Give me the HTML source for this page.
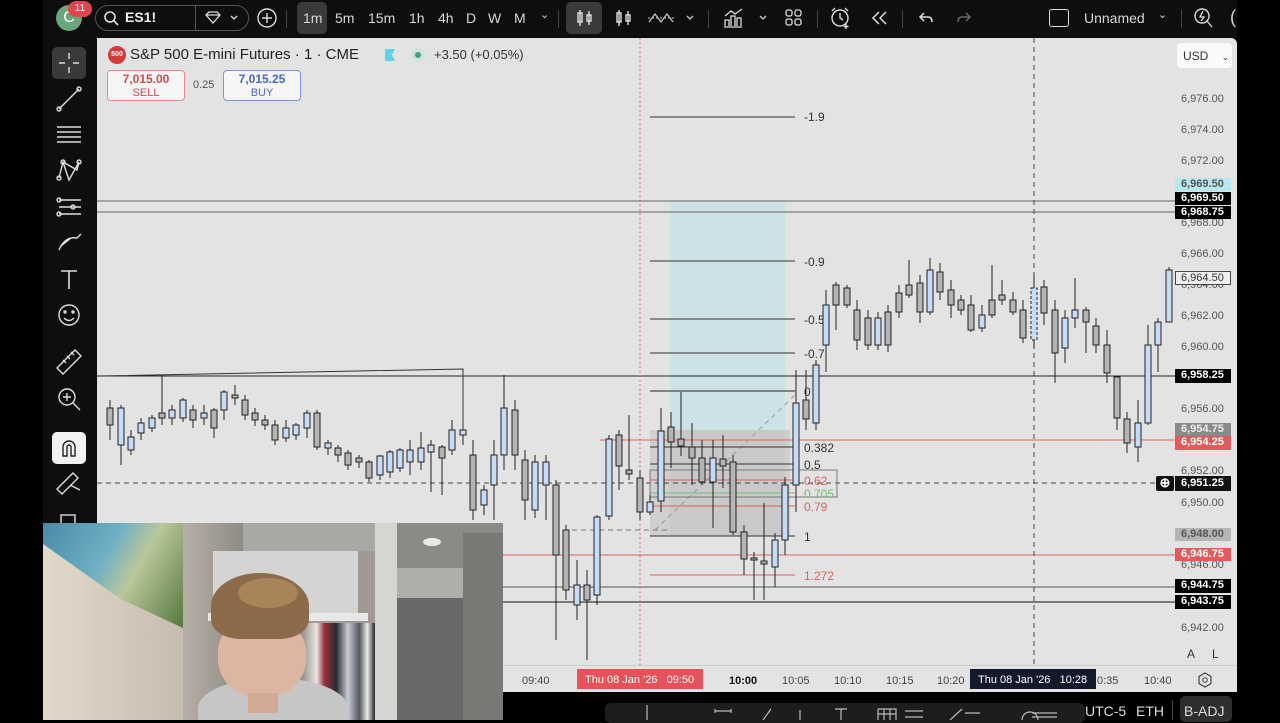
<!DOCTYPE html>
<html><head><meta charset="utf-8"><style>
*{margin:0;padding:0;box-sizing:border-box}
body{width:1280px;height:720px;background:#000;position:relative;overflow:hidden;font-family:"Liberation Sans",sans-serif}
.a{position:absolute}
.tb{color:#d8d8d8;font-size:14px}
</style></head><body>
<!-- top toolbar -->
<div class="a" style="left:43px;top:0;width:1194px;height:38px;background:#0e0e0e"></div>
<div class="a" style="left:56px;top:5px;width:26px;height:26px;border-radius:50%;background:#6aa77d;color:#fff;font-size:16px;text-align:center;line-height:26px">C</div>
<div class="a" style="left:68px;top:1px;width:24px;height:16px;border-radius:8px;background:#e0464f;color:#fff;font-size:10px;text-align:center;line-height:16px">11</div>
<div class="a" style="left:95px;top:5px;width:154px;height:26px;border:1px solid #555;border-radius:13px"></div>
<div class="a" style="left:195px;top:5px;width:1px;height:26px;background:#555"></div>
<svg class="a" style="left:103px;top:10px" width="16" height="16"><circle cx="7" cy="7" r="5" fill="none" stroke="#ddd" stroke-width="1.6"/><line x1="11" y1="11" x2="15" y2="15" stroke="#ddd" stroke-width="1.6"/></svg>
<div class="a tb" style="left:125px;top:9px;font-weight:bold;color:#eee">ES1!</div>
<svg class="a" style="left:204px;top:10px" width="40" height="16"><path d="M2 5 L5 2 H13 L16 5 L9 13 Z M2 5 H16" fill="none" stroke="#ddd" stroke-width="1.3"/><path d="M27 6 L30 9 L33 6" fill="none" stroke="#ddd" stroke-width="1.3"/></svg>
<svg class="a" style="left:256px;top:7px" width="22" height="22"><circle cx="11" cy="11" r="9" fill="none" stroke="#ddd" stroke-width="1.4"/><path d="M11 6V16M6 11H16" stroke="#ddd" stroke-width="1.4"/></svg>
<div class="a" style="left:286px;top:10px;width:1px;height:18px;background:#444"></div>
<div class="a" style="left:297px;top:2px;width:30px;height:32px;background:#3a3a3a;border-radius:5px"></div>
<div class="a tb" style="left:303px;top:10px">1m</div>
<div class="a tb" style="left:335px;top:10px">5m</div>
<div class="a tb" style="left:368px;top:10px">15m</div>
<div class="a tb" style="left:409px;top:10px">1h</div>
<div class="a tb" style="left:438px;top:10px">4h</div>
<div class="a tb" style="left:466px;top:10px">D</div>
<div class="a tb" style="left:488px;top:10px">W</div>
<div class="a tb" style="left:514px;top:10px">M</div>
<div class="a tb" style="left:540px;top:8px;font-size:11px">⌄</div>
<div class="a" style="left:558px;top:10px;width:1px;height:18px;background:#444"></div>
<div class="a" style="left:566px;top:2px;width:36px;height:32px;background:#3a3a3a;border-radius:5px"></div>
<svg class="a" style="left:575px;top:8px" width="20" height="20"><path d="M5 2V18M5 5H3V14H7V5ZM14 3V17M12 7H16V13H12Z" fill="none" stroke="#ddd" stroke-width="1.4"/></svg>
<svg class="a" style="left:614px;top:8px" width="20" height="20"><path d="M5 2V18M3 5H7V14H3ZM14 3V17" fill="none" stroke="#ddd" stroke-width="1.4"/><rect x="12" y="7" width="4" height="6" fill="none" stroke="#ddd" stroke-width="1.4"/></svg>
<svg class="a" style="left:647px;top:10px" width="50" height="16"><path d="M2 12L8 4L14 12L20 4L26 12" fill="none" stroke="#ccc" stroke-width="1.2"/><line x1="1" y1="8" x2="27" y2="8" stroke="#ccc" stroke-dasharray="2 2"/><path d="M40 6L43 9L46 6" fill="none" stroke="#ccc" stroke-width="1.3"/></svg>
<div class="a" style="left:708px;top:10px;width:1px;height:18px;background:#444"></div>
<svg class="a" style="left:722px;top:6px" width="48" height="24"><path d="M3 20V14H7V20M9 20V10H13V20M15 20V12H19V20M2 21H20M3 10L9 5L13 8L20 3" fill="none" stroke="#ddd" stroke-width="1.3"/><path d="M38 10L41 13L44 10" fill="none" stroke="#ccc" stroke-width="1.3"/></svg>
<svg class="a" style="left:784px;top:8px" width="20" height="20"><rect x="2" y="2" width="6" height="6" rx="2" fill="none" stroke="#ddd" stroke-width="1.3"/><rect x="11" y="2" width="6" height="6" rx="2" fill="none" stroke="#ddd" stroke-width="1.3"/><rect x="2" y="11" width="6" height="6" rx="2" fill="none" stroke="#ddd" stroke-width="1.3"/><rect x="11" y="11" width="6" height="6" rx="2" fill="none" stroke="#ddd" stroke-width="1.3"/></svg>
<div class="a" style="left:817px;top:10px;width:1px;height:18px;background:#444"></div>
<svg class="a" style="left:829px;top:6px" width="24" height="24"><circle cx="11" cy="12" r="8" fill="none" stroke="#ddd" stroke-width="1.4"/><path d="M11 7V12L14 14M3 5L6 2M19 5L16 2M17 18V23M14.5 20.5H19.5" fill="none" stroke="#ddd" stroke-width="1.4"/></svg>
<svg class="a" style="left:870px;top:9px" width="20" height="18"><path d="M9 3L3 9L9 15M16 3L10 9L16 15" fill="none" stroke="#ddd" stroke-width="1.5"/></svg>
<div class="a" style="left:902px;top:10px;width:1px;height:18px;background:#444"></div>
<svg class="a" style="left:916px;top:9px" width="20" height="18"><path d="M8 4L4 8L8 12M4 8H12Q16 8 16 13" fill="none" stroke="#ddd" stroke-width="1.5"/></svg>
<svg class="a" style="left:954px;top:9px" width="20" height="18"><path d="M12 4L16 8L12 12M16 8H8Q4 8 4 13" fill="none" stroke="#666" stroke-width="1.5"/></svg>
<div class="a" style="left:1049px;top:9px;width:20px;height:18px;border:1.5px solid #ddd;border-radius:3px"></div>
<div class="a tb" style="left:1084px;top:10px">Unnamed</div>
<div class="a tb" style="left:1158px;top:8px;font-size:11px">⌄</div>
<div class="a" style="left:1181px;top:10px;width:1px;height:18px;background:#444"></div>
<svg class="a" style="left:1192px;top:6px" width="22" height="24"><circle cx="10" cy="10" r="7" fill="none" stroke="#ddd" stroke-width="1.4"/><path d="M15 15L20 21M11 5L8 11H12L9 15" fill="none" stroke="#ddd" stroke-width="1.3"/></svg>
<div class="a tb" style="left:1230px;top:7px;font-size:18px">(</div>

<!-- left toolbar -->
<div class="a" style="left:43px;top:38px;width:54px;height:490px;background:#0e0e0e"></div>
<div class="a" style="left:52px;top:47px;width:34px;height:32px;background:#3a3a3a;border-radius:5px"></div>
<svg class="a" style="left:43px;top:38px" width="54" height="490" fill="none" stroke="#ddd" stroke-width="1.4">
<path d="M26 15V21M26 29V35M16 25H22M30 25H36"/>
<path d="M16 71L36 51"/><circle cx="16" cy="71" r="2"/><circle cx="36" cy="51" r="2"/>
<path d="M14 89H38M14 94H38M14 99H38M14 104H38"/>
<path d="M16 140L20 124L34 132L36 124M20 124L26 142L36 124"/><circle cx="16" cy="140" r="2"/><circle cx="20" cy="124" r="2"/><circle cx="36" cy="124" r="2"/>
<path d="M16 162H38M16 169H38M16 176H38"/><circle cx="16" cy="162" r="2"/><circle cx="16" cy="176" r="2"/><circle cx="30" cy="169" r="2"/>
<path d="M16 212Q22 198 34 200L38 196M18 208L28 200"/>
<path d="M18 233H34M26 233V251" stroke-width="1.6"/>
<circle cx="26" cy="277" r="10"/><path d="M21 280Q26 285 31 280"/><circle cx="22" cy="274" r="1"/><circle cx="30" cy="274" r="1"/>
<path d="M14 330L32 312L38 318L20 336ZM20 322L23 325M24 318L27 321M28 314L31 317"/>
<circle cx="24" cy="359" r="8"/><path d="M30 365L37 372M24 355V363M20 359H28"/>
<path d="M14 451L30 435L35 440L19 456ZM27 447L37 452"/>
<rect x="18" y="477" width="14" height="10"/>
</svg>
<div class="a" style="left:52px;top:432px;width:34px;height:32px;background:#f2f2f2;border-radius:5px"></div>
<svg class="a" style="left:59px;top:438px" width="20" height="20"><path d="M4 18V9A6 6 0 0 1 16 9V18H12V9A2 2 0 0 0 8 9V18Z" fill="none" stroke="#222" stroke-width="1.4"/></svg>

<!-- chart -->
<div class="a" style="left:97px;top:38px;width:1140px;height:654px;background:#e3e3e3;border-radius:0 6px 0 0"></div>
<svg class="a" style="left:0;top:0" width="1237" height="692">
<!-- zones -->
<rect x="670" y="201" width="115" height="229" fill="#cde2e6"/>
<rect x="650" y="430" width="140" height="106" fill="#c9c9c9" opacity="0.8"/>
<rect x="670" y="430" width="115" height="106" fill="#c4c4c4" opacity="0.6"/>
<!-- horizontal lines -->
<line x1="97" y1="201" x2="1175" y2="201" stroke="#666"/>
<line x1="97" y1="212" x2="1175" y2="212" stroke="#666"/>
<line x1="97" y1="376" x2="1175" y2="376" stroke="#222"/>
<polyline points="100,376 463,369 463,430" fill="none" stroke="#333"/>
<line x1="600" y1="440" x2="1175" y2="440" stroke="#e06060"/>
<line x1="503" y1="555" x2="1175" y2="555" stroke="#e06060"/>
<line x1="503" y1="587" x2="1175" y2="587" stroke="#555"/>
<line x1="503" y1="602" x2="1175" y2="602" stroke="#111"/>
<line x1="97" y1="483" x2="1160" y2="483" stroke="#444" stroke-dasharray="5 4"/>
<line x1="1034" y1="38" x2="1034" y2="665" stroke="#444" stroke-dasharray="5 4"/>
<line x1="640" y1="38" x2="640" y2="665" stroke="#e04848" stroke-dasharray="1.5 3"/>
<line x1="563" y1="530" x2="670" y2="530" stroke="#777" stroke-dasharray="5 4"/>
<line x1="655" y1="530" x2="795" y2="395" stroke="#999" stroke-dasharray="5 4"/>
<!-- fib -->
<g stroke-width="1">
<line x1="650" y1="117" x2="795" y2="117" stroke="#333"/>
<line x1="650" y1="261" x2="795" y2="261" stroke="#333"/>
<line x1="650" y1="319" x2="795" y2="319" stroke="#333"/>
<line x1="650" y1="353" x2="795" y2="353" stroke="#333"/>
<line x1="650" y1="391" x2="795" y2="391" stroke="#222"/>
<line x1="650" y1="447" x2="795" y2="447" stroke="#333"/>
<line x1="650" y1="464" x2="795" y2="464" stroke="#333"/>
<line x1="650" y1="480" x2="795" y2="480" stroke="#e06060"/>
<line x1="650" y1="493" x2="795" y2="493" stroke="#7cb87c"/>
<line x1="650" y1="506" x2="795" y2="506" stroke="#e06060"/>
<line x1="650" y1="536" x2="795" y2="536" stroke="#333"/>
<line x1="650" y1="575" x2="795" y2="575" stroke="#e06060"/>
<rect x="650" y="470" width="187" height="27" fill="none" stroke="#777"/>
</g>
<g font-family="Liberation Sans" font-size="12">
<text x="804" y="121" fill="#333">-1.9</text>
<text x="804" y="266" fill="#333">-0.9</text>
<text x="804" y="324" fill="#333">-0.5</text>
<text x="804" y="358" fill="#333">-0.7</text>
<text x="804" y="396" fill="#333">0</text>
<text x="804" y="452" fill="#333">0.382</text>
<text x="804" y="469" fill="#333">0.5</text>
<text x="804" y="485" fill="#e06060">0.62</text>
<text x="804" y="498" fill="#7cb87c">0.705</text>
<text x="804" y="511" fill="#e06060">0.79</text>
<text x="804" y="541" fill="#333">1</text>
<text x="804" y="580" fill="#e06060">1.272</text>
</g>
<!-- candles -->
<g stroke="#222" stroke-width="1" id="c">
<path d="M110 400V440M121 405V465M131 430V455M141 418V440M152 415V432M162 375V425M172 405V425M183 398V422M193 405V428M204 405V425M214 408V438M224 390V420M235 385V405M245 395V420M255 408V426M265 415V430M275 420V445M286 420V442M296 423V440M307 410V438M317 410V450M328 440V455M338 445V462M348 450V470M359 455V468M369 460V482M380 455V480M390 450V478M400 448V472M410 440V475M421 432V470M431 440V492M442 445V495M452 420V455M463 430V445M473 440V520M484 485V515M494 440V520M504 375V470M515 400V470M525 450V520M535 455V518M546 455V520M556 480V640M566 525V600M577 560V620M587 570V660M597 515V605M609 435V520M619 430V490M629 415V480M640 470V520M650 495V515M661 408V512M671 412V468M681 392V456M692 423V485M702 440V485M713 440V528M723 435V488M733 455V535M744 525V575M754 552V600M764 503V600M775 533V587M785 477V555M796 370V512M806 370V430M816 360V430M826 290V372M836 282V330M847 285V308M857 300V350M868 310V350M878 312V350M888 305V352M899 285V318M909 260V298M920 275V323M930 258V315M940 263V300M951 280V318M961 295V315M971 295V332M982 305V332M992 265V318M1002 280V305M1013 292V315M1023 300V343M1034 275V348M1044 280V325M1055 300V383M1065 310V363M1075 278V328M1086 307V353M1096 318V353M1107 330V383M1117 377V430M1127 412V453M1138 400V462M1148 325V425M1158 318V372M1169 267V322" fill="none"/>
<g fill="#b4b4b4">
<rect x="107" y="408" width="6" height="17"/><rect x="159" y="413" width="6" height="5"/><rect x="190" y="410" width="6" height="10"/><rect x="211" y="410" width="6" height="18"/><rect x="232" y="395" width="6" height="3"/><rect x="242" y="400" width="6" height="15"/><rect x="252" y="413" width="6" height="7"/><rect x="262" y="420" width="6" height="5"/><rect x="272" y="425" width="6" height="15"/><rect x="314" y="413" width="6" height="34"/><rect x="335" y="448" width="6" height="7"/><rect x="345" y="453" width="6" height="12"/><rect x="356" y="458" width="6" height="4"/><rect x="366" y="462" width="6" height="16"/><rect x="439" y="447" width="6" height="11"/><rect x="470" y="455" width="6" height="55"/><rect x="512" y="410" width="6" height="45"/><rect x="522" y="460" width="6" height="40"/><rect x="553" y="485" width="6" height="70"/><rect x="563" y="530" width="6" height="60"/><rect x="584" y="585" width="6" height="15"/><rect x="616" y="435" width="6" height="31"/><rect x="626" y="470" width="6" height="4"/><rect x="637" y="478" width="6" height="34"/><rect x="668" y="427" width="6" height="15"/><rect x="678" y="439" width="6" height="7"/><rect x="689" y="447" width="6" height="11"/><rect x="699" y="458" width="6" height="24"/><rect x="720" y="459" width="6" height="7"/><rect x="730" y="462" width="6" height="70"/><rect x="741" y="532" width="6" height="27"/><rect x="751" y="558" width="6" height="2"/><rect x="761" y="561" width="6" height="3"/><rect x="803" y="400" width="6" height="19"/><rect x="833" y="285" width="6" height="20"/><rect x="844" y="288" width="6" height="17"/><rect x="854" y="310" width="6" height="30"/><rect x="865" y="318" width="6" height="27"/><rect x="885" y="312" width="6" height="33"/><rect x="896" y="293" width="6" height="19"/><rect x="906" y="285" width="6" height="10"/><rect x="917" y="283" width="6" height="29"/><rect x="937" y="272" width="6" height="20"/><rect x="948" y="290" width="6" height="15"/><rect x="958" y="300" width="6" height="10"/><rect x="968" y="305" width="6" height="25"/><rect x="989" y="300" width="6" height="15"/><rect x="999" y="295" width="6" height="5"/><rect x="1010" y="300" width="6" height="12"/><rect x="1020" y="310" width="6" height="28"/><rect x="1041" y="287" width="6" height="26"/><rect x="1052" y="310" width="6" height="43"/><rect x="1083" y="310" width="6" height="12"/><rect x="1093" y="326" width="6" height="19"/><rect x="1104" y="345" width="6" height="28"/><rect x="1114" y="377" width="6" height="41"/><rect x="1124" y="419" width="6" height="24"/>
</g>
<g fill="#c6dbf6">
<rect x="118" y="408" width="6" height="37"/><rect x="128" y="437" width="6" height="13"/><rect x="138" y="423" width="6" height="10"/><rect x="149" y="418" width="6" height="10"/><rect x="169" y="410" width="6" height="8"/><rect x="180" y="400" width="6" height="18"/><rect x="201" y="413" width="6" height="5"/><rect x="221" y="392" width="6" height="18"/><rect x="283" y="428" width="6" height="10"/><rect x="293" y="425" width="6" height="10"/><rect x="304" y="413" width="6" height="15"/><rect x="325" y="443" width="6" height="5"/><rect x="377" y="456" width="6" height="19"/><rect x="387" y="452" width="6" height="20"/><rect x="397" y="450" width="6" height="18"/><rect x="407" y="450" width="6" height="12"/><rect x="418" y="448" width="6" height="14"/><rect x="428" y="445" width="6" height="7"/><rect x="449" y="430" width="6" height="20"/><rect x="460" y="430" width="6" height="5"/><rect x="481" y="490" width="6" height="15"/><rect x="491" y="455" width="6" height="30"/><rect x="501" y="408" width="6" height="47"/><rect x="532" y="462" width="6" height="48"/><rect x="543" y="462" width="6" height="23"/><rect x="574" y="585" width="6" height="20"/><rect x="594" y="517" width="6" height="78"/><rect x="606" y="439" width="6" height="77"/><rect x="647" y="502" width="6" height="10"/><rect x="658" y="431" width="6" height="70"/><rect x="710" y="458" width="6" height="24"/><rect x="772" y="540" width="6" height="27"/><rect x="782" y="485" width="6" height="55"/><rect x="793" y="403" width="6" height="82"/><rect x="813" y="365" width="6" height="58"/><rect x="823" y="305" width="6" height="40"/><rect x="875" y="318" width="6" height="27"/><rect x="927" y="270" width="6" height="42"/><rect x="979" y="315" width="6" height="13"/><rect x="1031" y="288" width="6" height="52" stroke-dasharray="3 2"/><rect x="1062" y="318" width="6" height="30"/><rect x="1072" y="310" width="6" height="8"/><rect x="1135" y="423" width="6" height="24"/><rect x="1145" y="345" width="6" height="78"/><rect x="1155" y="322" width="6" height="23"/><rect x="1166" y="270" width="6" height="52"/>
</g>
</g>
</svg>

<!-- header legend -->
<div class="a" style="left:108px;top:46px;width:18px;height:18px;border-radius:50%;background:#d33b3b;color:#fff;font-size:7px;font-weight:bold;text-align:center;line-height:18px">500</div>
<div class="a" style="left:130px;top:46px;font-size:15px;color:#222">S&amp;P 500 E-mini Futures · 1 · CME</div>
<div class="a" style="left:385px;top:49px;width:10px;height:12px;background:#5fd3e6;clip-path:polygon(0 0,100% 0,70% 50%,100% 100%,0 100%)"></div>
<div class="a" style="left:411px;top:48px;width:14px;height:14px;border-radius:50%;background:#cfe3da"></div>
<div class="a" style="left:415px;top:52px;width:6px;height:6px;border-radius:50%;background:#3f9d78"></div>
<div class="a" style="left:434px;top:47px;font-size:13px;color:#333">+3.50 (+0.05%)</div>
<div class="a" style="left:107px;top:70px;width:78px;height:31px;border:1px solid #e48a8a;border-radius:4px;background:#f6f6f6;text-align:center;font-size:12px;color:#d24a4a;line-height:13px;padding-top:2px"><b style="font-weight:bold">7,015.00</b><br><span style="font-size:11px">SELL</span></div>
<div class="a" style="left:193px;top:79px;font-size:11px;color:#555">0.25</div>
<div class="a" style="left:223px;top:70px;width:78px;height:31px;border:1px solid #7b94e0;border-radius:4px;background:#f6f6f6;text-align:center;font-size:12px;color:#4a66c8;line-height:13px;padding-top:2px"><b>7,015.25</b><br><span style="font-size:11px">BUY</span></div>
<div class="a" style="left:1177px;top:43px;width:55px;height:25px;background:#fafafa;border-radius:4px;font-size:12px;color:#333;padding:6px 0 0 6px">USD <span style="font-size:9px;margin-left:10px">⌄</span></div>

<!-- price axis -->
<div class="a" style="left:1175px;top:38px;width:62px;height:627px;font-size:11px;color:#555">
<div class="a" style="left:6px;top:55px">6,976.00</div>
<div class="a" style="left:6px;top:86px">6,974.00</div>
<div class="a" style="left:6px;top:117px">6,972.00</div>
<div class="a" style="left:6px;top:179px">6,968.00</div>
<div class="a" style="left:6px;top:210px">6,966.00</div>
<div class="a" style="left:6px;top:241px">6,964.00</div>
<div class="a" style="left:6px;top:272px">6,962.00</div>
<div class="a" style="left:6px;top:303px">6,960.00</div>
<div class="a" style="left:6px;top:365px">6,956.00</div>
<div class="a" style="left:6px;top:427px">6,952.00</div>
<div class="a" style="left:6px;top:459px">6,950.00</div>
<div class="a" style="left:6px;top:521px">6,946.00</div>
<div class="a" style="left:6px;top:584px">6,942.00</div>
</div>
<div class="a" style="left:1175px;top:0;font-size:11px;font-weight:bold">
<div class="a" style="left:0;top:178px;width:56px;height:13px;background:#b7e7ef;color:#555;padding-left:6px">6,969.50</div>
<div class="a" style="left:0;top:192px;width:56px;height:13px;background:#000;color:#fff;padding-left:6px">6,969.50</div>
<div class="a" style="left:0;top:206px;width:56px;height:13px;background:#000;color:#fff;padding-left:6px">6,968.75</div>
<div class="a" style="left:0;top:271px;width:56px;height:14px;background:#eee;border:1px solid #444;color:#333;padding-left:5px;font-weight:normal">6,964.50</div>
<div class="a" style="left:0;top:369px;width:56px;height:14px;background:#000;color:#fff;padding-left:6px">6,958.25</div>
<div class="a" style="left:0;top:423px;width:56px;height:13px;background:#8a8a8a;color:#eee;padding-left:6px">6,954.75</div>
<div class="a" style="left:0;top:436px;width:56px;height:14px;background:#e35a5a;color:#fff;padding-left:6px">6,954.25</div>
<div class="a" style="left:-19px;top:476px;width:18px;height:15px;background:#111;border-radius:2px;color:#fff;text-align:center;font-size:13px;line-height:14px">⊕</div>
<div class="a" style="left:0;top:476px;width:56px;height:15px;background:#111;color:#fff;padding-left:6px;line-height:15px">6,951.25</div>
<div class="a" style="left:0;top:528px;width:56px;height:13px;background:#b5b5b5;color:#555;padding-left:6px">6,948.00</div>
<div class="a" style="left:0;top:548px;width:56px;height:13px;background:#e35a5a;color:#fff;padding-left:6px">6,946.75</div>
<div class="a" style="left:0;top:579px;width:56px;height:14px;background:#000;color:#fff;padding-left:6px">6,944.75</div>
<div class="a" style="left:0;top:595px;width:56px;height:14px;background:#000;color:#fff;padding-left:6px">6,943.75</div>
</div>
<div class="a" style="left:1187px;top:647px;font-size:12px;color:#333">A</div>
<div class="a" style="left:1212px;top:647px;font-size:12px;color:#333">L</div>

<!-- time axis -->
<div class="a" style="left:97px;top:665px;width:1140px;height:27px;background:#e3e3e3;border-top:1px solid #ccc;font-size:11px;color:#444">
<div class="a" style="left:425px;top:9px">09:40</div>
<div class="a" style="left:632px;top:9px;font-weight:bold;color:#111">10:00</div>
<div class="a" style="left:685px;top:9px">10:05</div>
<div class="a" style="left:737px;top:9px">10:10</div>
<div class="a" style="left:789px;top:9px">10:15</div>
<div class="a" style="left:840px;top:9px">10:20</div>
<div class="a" style="left:1000px;top:9px">0:35</div>
<div class="a" style="left:1047px;top:9px">10:40</div>
<div class="a" style="left:480px;top:3px;width:126px;height:20px;background:#e5525a;color:#fff;padding:5px 0 0 8px">Thu 08 Jan '26&nbsp;&nbsp; 09:50</div>
<div class="a" style="left:873px;top:3px;width:126px;height:20px;background:#141a2a;color:#fff;padding:5px 0 0 8px">Thu 08 Jan '26&nbsp;&nbsp; 10:28</div>
<svg class="a" style="left:1100px;top:6px" width="16" height="16"><path d="M8 1L14 4.5V11.5L8 15L2 11.5V4.5Z" fill="none" stroke="#444" stroke-width="1.2"/><circle cx="8" cy="8" r="2.3" fill="none" stroke="#444"/></svg>
</div>

<!-- bottom bar -->
<div class="a" style="left:605px;top:703px;width:480px;height:20px;background:#1d1d1f;border-radius:6px"></div>
<svg class="a" style="left:605px;top:703px" width="480" height="17" fill="none" stroke="#bbb" stroke-width="1.2">
<path d="M42 2V17M110 8H126M110 6V10M126 6V10M158 17L166 6M195 7V17M230 6H242M236 6V17M273 6H291V17M273 6V17M279 6V17M285 6V17M273 11H291M300 8H318M300 14H318M345 17L357 6M360 10H375M427 10H452M427 14H452"/>
<circle cx="425" cy="17" r="8"/>
</svg>
<div class="a" style="left:1085px;top:703px;font-size:14px;color:#ddd">UTC-5</div>
<div class="a" style="left:1136px;top:703px;font-size:14px;color:#ddd">ETH</div>
<div class="a" style="left:1172px;top:700px;width:1px;height:20px;background:#444"></div>
<div class="a" style="left:1180px;top:696px;width:52px;height:26px;background:#2e2e2e;border-radius:5px;color:#ddd;font-size:14px;padding:7px 0 0 4px">B-ADJ</div>

<!-- webcam -->
<div class="a" style="left:43px;top:523px;width:460px;height:197px;overflow:hidden;background:#9e9a93">
<div class="a" style="left:0;top:0;width:160px;height:197px;background:linear-gradient(90deg,#e2d9cb,#c2b9ab)"></div>
<div class="a" style="left:140px;top:0;width:60px;height:197px;background:linear-gradient(90deg,#b5afa5,#8f8c86)"></div>
<div class="a" style="left:0;top:0;width:140px;height:105px;background:linear-gradient(120deg,#4a8aa8,#6fb0c4 40%,#b9c79a 60%,#55773f);clip-path:polygon(0 0,100% 0,100% 100%,55% 72%,0 20%)"></div>
<div class="a" style="left:170px;top:28px;width:145px;height:62px;background:#d4d4d2"></div>
<div class="a" style="left:200px;top:0;width:135px;height:28px;background:#a8a8a5"></div>
<div class="a" style="left:165px;top:90px;width:160px;height:8px;background:#e8e8e8"></div>
<div class="a" style="left:258px;top:100px;width:78px;height:97px;background:linear-gradient(90deg,#8f8a84,#e8e6e2 20%,#9b3040 30%,#2a2a2e 45%,#c8ccd4 60%,#55585e 75%,#eaeaea 85%,#222 95%)"></div>
<div class="a" style="left:332px;top:0;width:22px;height:197px;background:#d5d5d2"></div>
<div class="a" style="left:354px;top:0;width:106px;height:45px;background:#8a8a86"></div>
<div class="a" style="left:380px;top:15px;width:18px;height:8px;border-radius:50%;background:#e8e8e6"></div>
<div class="a" style="left:354px;top:45px;width:66px;height:30px;background:#aeaeaa"></div>
<div class="a" style="left:354px;top:75px;width:66px;height:122px;background:#686a67"></div>
<div class="a" style="left:420px;top:10px;width:40px;height:187px;background:#777975"></div>
<div class="a" style="left:155px;top:155px;width:150px;height:60px;border-radius:50% 50% 0 0;background:#c6c6c6"></div>
<div class="a" style="left:175px;top:95px;width:88px;height:80px;border-radius:42% 42% 48% 48%;background:#dcb6a0"></div>
<div class="a" style="left:205px;top:170px;width:30px;height:20px;background:#d2aa94"></div>
<div class="a" style="left:168px;top:50px;width:98px;height:66px;border-radius:50% 50% 30% 30%;background:#8c6b4b"></div>
<div class="a" style="left:195px;top:55px;width:60px;height:30px;border-radius:50%;background:#a98458"></div>
</div>
</body></html>
